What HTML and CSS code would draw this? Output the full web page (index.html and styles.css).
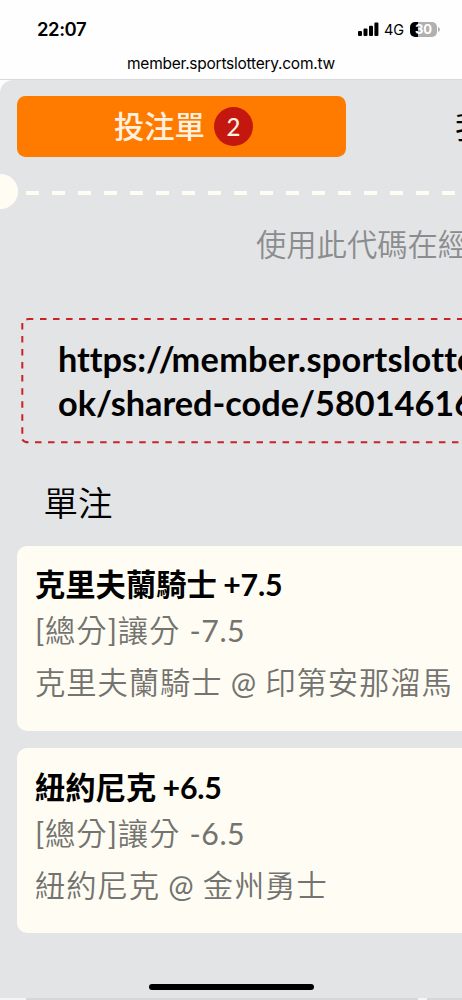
FILE: index.html
```html
<!DOCTYPE html>
<html lang="zh-Hant">
<head>
<meta charset="utf-8">
<title>投注單</title>
<link rel="stylesheet" href="styles.css">
</head>
<body>
<header class="browser">
  <div class="status">
    <span class="clock">22:07</span>
    <div class="indicators">
      <svg class="signal" width="20" height="14" viewBox="0 0 20 14"><rect x="0" y="9" width="4" height="5" rx="1"/><rect x="5.5" y="6.5" width="4" height="7.5" rx="1"/><rect x="11" y="3.7" width="4" height="10.3" rx="1"/><rect x="16.4" y="0.5" width="4" height="13.5" rx="1"/></svg>
      <span class="network">4G</span>
      <div class="battery"><span class="level">30</span></div>
      <svg class="battery-tip" width="2" height="5" viewBox="0 0 2 5"><path d="M0 0Q2 .8 2 2.5T0 5Z"/></svg>
    </div>
  </div>
  <div class="address">member.sportslottery.com.tw</div>
</header>
<main class="page">
  <nav class="tabs">
    <div class="tab active"><span class="tab-label">投注單</span><span class="count">2</span></div>
    <div class="tab other">我</div>
  </nav>
  <div class="divider"><span class="notch"></span><span class="dashes"></span></div>
  <p class="hint">使用此代碼在經</p>
  <section class="share">
    <svg class="outline" width="462" height="130" viewBox="0 0 462 130">
      <path d="M26.3 4.5Q27.5 4 28.5 4H33.3"/>
      <path d="M40 4H462" stroke-dasharray="6.5 6.53"/>
      <path d="M22.3 8V120" stroke-dasharray="6.5 6.53"/>
      <path d="M22.3 124.4Q24 127.2 28.5 127.3"/>
      <path d="M35 127.3H462" stroke-dasharray="6.5 6.53"/>
    </svg>
    <div class="url">https:<span class="slashes">//</span><span class="host">member.sportslotte</span><br>ok/shared-code/58014616</div>
  </section>
  <h1 class="title">單注</h1>
  <section class="bets">
    <article class="bet">
      <h2 class="pick">克里夫蘭騎士 <b>+7.5</b></h2>
      <p class="market"><span class="bracket">[</span>總分<span class="bracket">]</span>讓分 <span class="latin">-7.5</span></p>
      <p class="match">克里夫蘭騎士 <span class="at">@</span> 印第安那溜馬</p>
    </article>
    <article class="bet">
      <h2 class="pick">紐約尼克 <b>+6.5</b></h2>
      <p class="market"><span class="bracket">[</span>總分<span class="bracket">]</span>讓分 <span class="latin">-6.5</span></p>
      <p class="match">紐約尼克 <span class="at">@</span> 金州勇士</p>
    </article>
  </section>
  <footer class="bottom"><span class="home"></span><div class="edge"></div></footer>
</main>
</body>
</html>
```
FILE: styles.css
```css
* { box-sizing: border-box; }
html, body { margin: 0; width: 462px; height: 1000px; overflow: hidden; background: #fefefe; }
body { font-family: Lato, "Noto Sans CJK TC", sans-serif; color: #000; }
h1, h2, p { margin: 0; font-weight: 400; }
.browser { height: 80px; border-bottom: 1px solid #d8d9da; font-family: Inter, "Liberation Sans", sans-serif; }
.status { height: 52px; padding: 8px 22px 0 37px; display: flex; justify-content: space-between; align-items: center; }
.clock { font-size: 18.5px; font-weight: 600; letter-spacing: -0.45px; line-height: 43px; padding-bottom: 1px; }
.indicators { display: flex; align-items: center; padding-bottom: 2px; }
.signal { margin-right: 6px; overflow: visible; }
.network { font-size: 14.5px; letter-spacing: -0.2px; margin-right: 6px; width: 20px; white-space: nowrap; }
.battery { width: 27px; height: 15px; border-radius: 5px; background: linear-gradient(90deg, #000 30%, #b0b0b0 30%); color: #fff; display: flex; justify-content: center; align-items: center; }
.level { font-size: 13px; font-weight: 700; line-height: 15px; }
.battery-tip { margin-left: 1px; fill: #b0b0b0; }
.address { text-align: center; font-size: 15.5px; line-height: 24px; letter-spacing: -0.25px; }
.page { height: 920px; background: #e3e4e6; border-top-left-radius: 13px; display: flex; flex-direction: column; overflow: hidden; }
.tabs { display: flex; width: 800px; height: 76px; padding: 16px 0 0 17px; }
.tab { height: 60.5px; display: flex; align-items: center; font-size: 30.3px; line-height: 60px; white-space: nowrap; }
.active { width: 328.5px; border-radius: 8.5px; background: #ff7b00; color: #fff0e0; padding-left: 97px; gap: 9px; font-weight: 500; }
.other { padding-left: 109.5px; }
.count { width: 39px; height: 39px; border-radius: 50%; background: #c4170f; font-size: 24px; line-height: 39px; text-align: center; }
.divider { height: 64px; padding-top: 17px; display: flex; align-items: center; padding-bottom: 11px; }
.notch { width: 17.5px; height: 35px; border-radius: 0 18px 18px 0; background: #fffdf3; margin-right: 8.5px; flex: none; }
.dashes { flex: 1; height: 4.6px; margin-top: 4px; background: repeating-linear-gradient(90deg, #fffdf3 0 13px, transparent 13px 26px); }
.hint { height: 95px; padding: 0 0 0 256px; font-size: 30.3px; line-height: 49px; color: #8b8c8e; white-space: nowrap; font-weight: 350; }
.share { height: 130px; display: grid; }
.outline { grid-area: 1 / 1; fill: none; stroke: #c92327; stroke-width: 2; }
.url { grid-area: 1 / 1; padding: 22px 0 0 58px; font-size: 34.3px; line-height: 43.5px; font-weight: 700; white-space: nowrap; font-variant-ligatures: none; }
.slashes { font-kerning: none; letter-spacing: -3.2px; }
.host { letter-spacing: 0.25px; }
.title { height: 100.5px; padding: 33px 0 0 43.5px; font-size: 34.5px; line-height: 50px; font-weight: 350; }
.bets { display: flex; flex-direction: column; gap: 17.5px; padding-left: 17px; }
.bet { height: 185px; background: #fffdf3; border-radius: 10px 0 0 10px; padding: 13.5px 0 0 18px; white-space: nowrap; }
.pick { font-size: 30.3px; line-height: 50px; font-weight: 700; word-spacing: -1px; }
.pick b { font-weight: 700; letter-spacing: -0.2px; }
.market, .match { font-size: 30.3px; line-height: 43px; letter-spacing: 1px; color: #737370; font-weight: 350; }
.bracket { font-weight: 400; letter-spacing: 0.8px; }
.latin { font-weight: 400; letter-spacing: 0.5px; }
.match { line-height: 61px; letter-spacing: 0.95px; }
.at { font-weight: 400; margin: 0 -1px 0 -1px; }
.bottom { flex: 1; display: flex; flex-direction: column; align-items: center; justify-content: space-between; padding-top: 51px; }
.home { width: 165px; height: 6px; border-radius: 3px; background: #000; }
.edge { width: 462px; height: 2px; background: linear-gradient(90deg, #f5f5f5 26px, #d6d7d8 26px 418px, #f5f5f5 418px 427px, #d6d7d8 427px); }
```
